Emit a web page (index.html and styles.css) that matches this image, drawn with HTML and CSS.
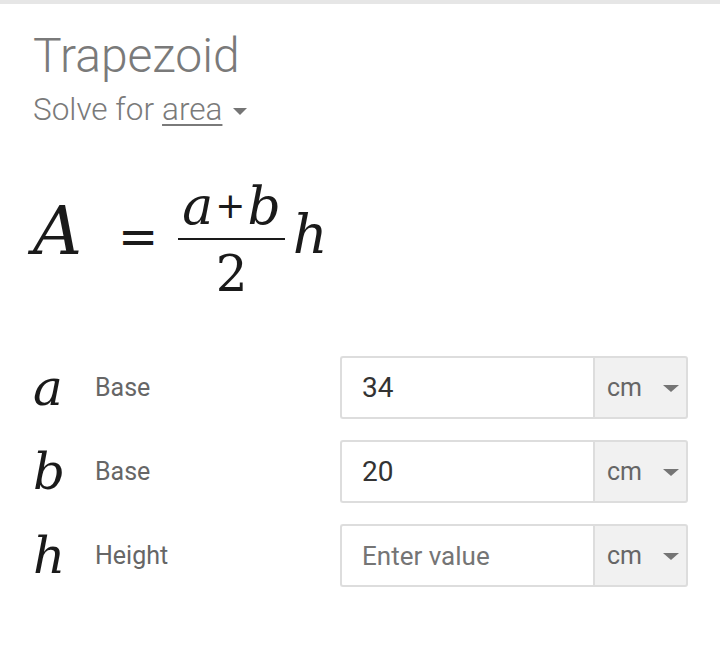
FILE: index.html
```html
<!DOCTYPE html>
<html>
<head>
<meta charset="utf-8">
<link rel="stylesheet" href="styles.css">
</head>
<body>
<div class="topbar"></div>
<main class="card">
  <h1 class="title">Trapezoid</h1>
  <div class="solve">Solve for <span class="solve-link">area</span><span class="caret caret-lg"></span></div>

  <div class="formula">
    <span class="var-big">A</span>
    <span class="eq">=</span>
    <span class="frac">
      <span class="num"><i>a</i><span class="plus">+</span><i>b</i></span>
      <span class="den">2</span>
    </span>
    <i class="var-h">h</i>
  </div>

  <div class="rows">
    <div class="row">
      <i class="var">a</i>
      <span class="label">Base</span>
      <div class="field">
        <div class="input value">34</div>
        <div class="unit">cm<span class="caret"></span></div>
      </div>
    </div>
    <div class="row">
      <i class="var">b</i>
      <span class="label">Base</span>
      <div class="field">
        <div class="input value">20</div>
        <div class="unit">cm<span class="caret"></span></div>
      </div>
    </div>
    <div class="row">
      <i class="var">h</i>
      <span class="label">Height</span>
      <div class="field">
        <div class="input placeholder">Enter value</div>
        <div class="unit">cm<span class="caret"></span></div>
      </div>
    </div>
  </div>
</main>
</body>
</html>
```

FILE: styles.css
```css
html, body {
  margin: 0;
  padding: 0;
  background: #ffffff;
}

body {
  width: 720px;
  height: 646px;
  overflow: hidden;
  font-family: Roboto, "Liberation Sans", sans-serif;
}

.topbar {
  height: 4px;
  background: #e6e6e6;
}

.card {
  padding: 0 0 0 33px;
}

.title {
  margin: 0;
  padding-top: 24px;
  font-size: 48px;
  line-height: 56px;
  font-weight: 300;
  color: #7a7a7a;
}

.solve {
  margin-top: 8px;
  font-size: 31.5px;
  line-height: 36px;
  font-weight: 300;
  color: #7a7a7a;
  display: flex;
  align-items: center;
}

.solve-link {
  margin-left: 8px;
  text-decoration: underline;
  text-decoration-thickness: 2px;
  text-underline-offset: 4px;
}

.caret {
  display: inline-block;
  width: 0;
  height: 0;
  border-left: 7px solid transparent;
  border-right: 7px solid transparent;
  border-top: 7px solid #757575;
}

.caret-lg {
  margin-left: 11px;
  margin-top: 2px;
}

.formula {
  display: flex;
  align-items: center;
  margin-top: 50px;
  font-family: "DejaVu Serif", serif;
  color: #1a1a1a;
}

.var-big {
  font-style: italic;
  font-size: 68px;
  line-height: 80px;
  margin-bottom: 20px;
}

.eq {
  font-family: "DejaVu Sans", sans-serif;
  font-size: 48px;
  margin-left: 36px;
  margin-right: 20px;
  margin-bottom: 10px;
}

.frac {
  display: inline-flex;
  flex-direction: column;
  align-items: center;
}

.num {
  font-size: 52px;
  line-height: 56px;
  padding: 0 4px 4px;
  border-bottom: 2px solid #1a1a1a;
}

.plus {
  font-family: "DejaVu Sans", sans-serif;
  font-style: normal;
  font-size: 36px;
  margin: 0 2px;
  vertical-align: 6px;
}

.den {
  font-size: 50px;
  line-height: 60px;
  padding-top: 4px;
}

.var-h {
  font-size: 54px;
  margin-left: 8px;
  margin-bottom: 14px;
}

.rows {
  margin-top: 52px;
  display: flex;
  flex-direction: column;
  gap: 21px;
}

.row {
  display: flex;
  align-items: center;
  height: 63px;
}

.var {
  width: 62px;
  font-family: "DejaVu Serif", serif;
  font-size: 50px;
  color: #1a1a1a;
}

.label {
  width: 245px;
  font-size: 25px;
  color: #666666;
}

.field {
  display: flex;
  height: 63px;
}

.input {
  box-sizing: border-box;
  width: 253px;
  height: 63px;
  border: 2px solid #dddddd;
  border-right: none;
  border-radius: 3px 0 0 3px;
  padding-left: 20px;
  display: flex;
  align-items: center;
}

.value {
  font-size: 28px;
  color: #333333;
}

.placeholder {
  font-size: 26px;
  color: #757575;
}

.unit {
  box-sizing: border-box;
  width: 95px;
  height: 63px;
  border: 2px solid #dddddd;
  border-radius: 0 3px 3px 0;
  background: #f1f1f1;
  padding-left: 12px;
  display: flex;
  align-items: center;
  font-size: 25px;
  color: #666666;
}

.unit .caret {
  margin-left: 21px;
  margin-top: 2px;
  border-left-width: 8px;
  border-right-width: 8px;
  border-top-width: 7px;
}
```
